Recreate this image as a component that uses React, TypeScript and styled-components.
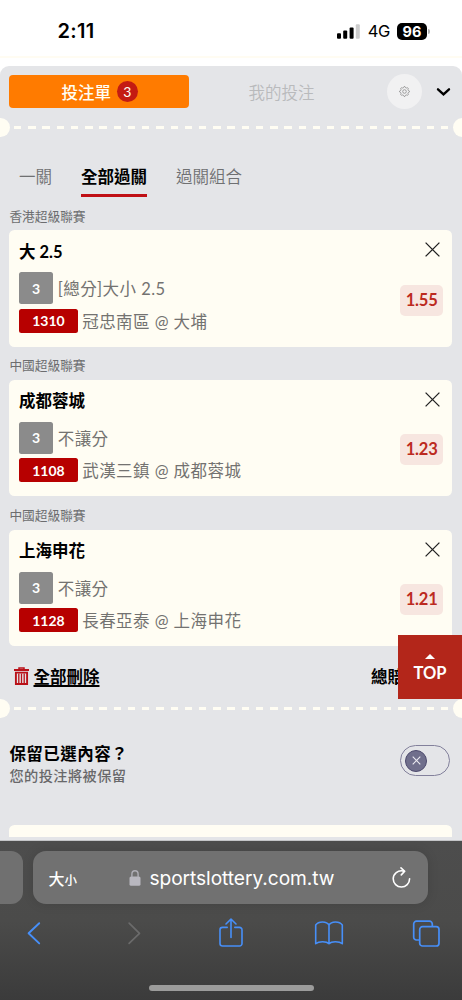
import React from "react";
import styled, { createGlobalStyle } from "styled-components";

const GlobalStyle = createGlobalStyle`
  * { box-sizing: border-box; }
  body { margin: 0; background: #fff; }
  button { border: 0; padding: 0; background: none; font: inherit; color: inherit; letter-spacing: inherit; }
  svg { display: block; flex: none; }
`;

const cream = "#fffdf3";
const red = "#b3261a";

const Screen = styled.div`
  width: 462px;
  height: 1000px;
  overflow: hidden;
  display: flex;
  flex-direction: column;
  font-family: Lato, "Noto Sans CJK TC", sans-serif;
  font-size: 16.5px;
  color: #000;
`;

const StatusBar = styled.header`
  height: 65.5px;
  flex: none;
  display: flex;
  justify-content: space-between;
  padding: 18px 32px 0 57.5px;
  font-family: Inter, sans-serif;
  background: linear-gradient(#fff 56.5px, #fffcf2 56.5px, #fffcf2 58.5px, #fff 58.5px);
`;

const Clock = styled.time`
  font-size: 20px;
  line-height: 26px;
  font-weight: 600;
  letter-spacing: 0.3px;
`;

const StatusIcons = styled.div`
  display: flex;
  height: 26px;
  align-items: center;
`;

const Network = styled.span`
  font-size: 16.5px;
  font-weight: 400;
  letter-spacing: -0.3px;
  margin: 0 7px 0 8px;
`;

const Battery = styled.span`
  width: 30px;
  height: 17px;
  border-radius: 5px;
  background: #000;
  color: #fff;
  font-size: 14.5px;
  font-weight: 700;
  line-height: 17px;
  text-align: center;
`;

const BatteryTip = styled.span`
  width: 2px;
  height: 5px;
  margin-left: 1px;
  border-radius: 0 2px 2px 0;
  background: #b5b5b5;
`;

const Panel = styled.main`
  position: relative;
  height: 775.5px;
  flex: none;
  overflow: hidden;
  background: #e4e5e8;
  border-radius: 9px 9px 0 0;
  border-bottom: 1.5px solid #c4c5c8;
`;

const SlipHeader = styled.div`
  display: flex;
  align-items: center;
  height: 52px;
  padding: 0 10.5px 0 9.4px;
`;

const SlipTab = styled.button<{ $active?: boolean }>`
  display: flex;
  align-items: center;
  justify-content: center;
  gap: 6px;
  width: ${(p) => (p.$active ? 179.5 : 198)}px;
  height: 33px;
  padding-right: ${(p) => (p.$active ? 0 : 13)}px;
  padding-left: ${(p) => (p.$active ? 1 : 0)}px;
  border-radius: 4px;
  background: ${(p) => (p.$active ? "#ff7b00" : "transparent")};
  color: ${(p) => (p.$active ? cream : "#b9babc")};
  font-weight: ${(p) => (p.$active ? 500 : 350)};
`;

const Count = styled.span`
  width: 21px;
  height: 21px;
  border-radius: 50%;
  background: #c41b12;
  font-size: 14px;
  font-weight: 400;
  line-height: 21px;
  text-align: center;
`;

const Settings = styled.button`
  display: flex;
  align-items: center;
  justify-content: center;
  width: 35.5px;
  height: 35.5px;
  border-radius: 50%;
  background: #f1f1f2;
  margin-right: 14px;
`;

const Perforation = styled.div`
  display: flex;
  align-items: center;
  justify-content: space-between;
  height: 19px;
  margin: 0 -10px 0 -9.5px;
`;

const Notch = styled.span`
  width: 19px;
  height: 19px;
  border-radius: 50%;
  background: ${cream};
`;

const Dashes = styled.span`
  width: 434px;
  height: 2.5px;
  margin-top: 1px;
  background: repeating-linear-gradient(90deg, ${cream} 0 7.4px, transparent 7.4px 14.23px);
`;

const Modes = styled.nav`
  display: flex;
  gap: 29px;
  padding: 28px 0 0 18.9px;
  height: 60px;
`;

const Mode = styled.button<{ $active?: boolean }>`
  height: 32.5px;
  line-height: 24px;
  padding-bottom: 5px;
  border-bottom: 3.5px solid ${(p) => (p.$active ? "#c01015" : "transparent")};
  color: ${(p) => (p.$active ? "#000" : "#6f7072")};
  font-weight: ${(p) => (p.$active ? 700 : 350)};
`;

const Pick = styled.section`
  height: 149.7px;
  padding: 0 9.6px 0 9.4px;
`;

const League = styled.h2`
  margin: 0;
  height: 33.7px;
  padding-top: 10px;
  font-size: 12.7px;
  line-height: 19px;
  font-weight: 400;
  color: #6c6d6f;
`;

const Card = styled.article`
  display: flex;
  justify-content: space-between;
  height: 116.4px;
  padding: 9.6px 9.5px 0 9.5px;
  border-radius: 5.5px;
  background: ${cream};
`;

const Details = styled.div`
  display: flex;
  flex-direction: column;
`;

const Selection = styled.h3`
  margin: 0 0 8.5px;
  height: 24px;
  line-height: 25px;
  font-size: 16.5px;
  font-weight: 700;
`;

const Line = styled.div<{ $h: number }>`
  display: flex;
  align-items: center;
  gap: 4.3px;
  height: ${(p) => p.$h}px;
  margin-bottom: 4.5px;
  letter-spacing: 0.45px;
  color: #737270;
  white-space: nowrap;
`;

const Tag = styled.span<{ $code?: boolean }>`
  width: ${(p) => (p.$code ? 59 : 34.5)}px;
  height: 100%;
  border-radius: 2.5px;
  background: ${(p) => (p.$code ? "#b70000" : "#8b8b8b")};
  color: #fff;
  display: flex;
  align-items: center;
  justify-content: center;
  font-size: 14px;
  font-weight: 700;
  letter-spacing: 0;
`;

const Side = styled.div`
  display: flex;
  flex-direction: column;
  align-items: flex-end;
  justify-content: space-between;
  height: 76px;
`;

const Close = styled.button`
  margin: 2.5px 2.5px 0 0;
`;

const Odds = styled.span`
  width: 42.5px;
  height: 31px;
  border-radius: 5px;
  background: #f7e6e0;
  color: #bc2a20;
  font-size: 16.5px;
  font-weight: 700;
  line-height: 31px;
  letter-spacing: -0.2px;
  text-align: center;
`;

const Summary = styled.div`
  display: flex;
  justify-content: space-between;
  height: 53px;
  padding: 19px 9.5px 0 14px;
  line-height: 24px;
  font-weight: 700;
`;

const ClearAll = styled.button`
  display: flex;
  gap: 4.5px;
  height: 24px;
  font-weight: 700;
  text-decoration: underline;
  text-decoration-thickness: 1.5px;
  text-underline-offset: 2px;
  svg { margin-top: 1.5px; }
`;

const Total = styled.span`
  width: 81.5px;
`;

const Keep = styled.div`
  display: flex;
  justify-content: space-between;
  height: 107px;
  padding: 24.5px 12px 0 9.4px;
`;

const KeepTitle = styled.div`
  font-weight: 700;
  line-height: 24px;
  letter-spacing: 0.45px;
`;

const KeepNote = styled.div`
  font-size: 14.2px;
  font-weight: 500;
  line-height: 20px;
  letter-spacing: 0.45px;
  color: #68686a;
`;

const Toggle = styled.button`
  display: flex;
  align-items: center;
  width: 50px;
  height: 31px;
  margin-top: 3px;
  padding-left: 4px;
  border: 1.2px solid #82809b;
  border-radius: 16px;
`;

const Knob = styled.span`
  display: flex;
  align-items: center;
  justify-content: center;
  width: 22px;
  height: 22px;
  border-radius: 50%;
  border: 1.2px solid #4d4a6d;
  background: #706f8c;
`;

const NextCard = styled.div`
  height: 12.5px;
  margin: 0 9.6px 0 9.4px;
  border-radius: 5.5px 5.5px 0 0;
  background: ${cream};
`;

const TopButton = styled.button`
  position: absolute;
  right: 0;
  top: 569.5px;
  width: 64px;
  height: 64px;
  display: flex;
  flex-direction: column;
  align-items: center;
  padding-top: 18.5px;
  gap: 3.5px;
  background: ${red};
  color: #fff;
  font-size: 16.5px;
  font-weight: 700;
  line-height: 22px;
`;

const Browser = styled.footer`
  flex: 1;
  display: flex;
  flex-direction: column;
  align-items: center;
  padding-top: 10px;
  background: linear-gradient(#4d4d4d, #4b4b4a 50%, #3b3b3b);
`;

const Tabs = styled.div`
  display: flex;
  align-self: stretch;
  gap: 10px;
  height: 53px;
`;

const PreviousTab = styled.div`
  width: 23.4px;
  border-radius: 0 12px 12px 0;
  background: #707070;
`;

const Address = styled.div`
  display: flex;
  align-items: center;
  width: 395px;
  padding: 0 17px 0 15px;
  border-radius: 13px;
  background: #717171;
  box-shadow: 0 0 12px rgba(0, 0, 0, 0.12);
  color: #fff;
  font-family: Inter, "Noto Sans CJK TC", sans-serif;
  font-size: 19.2px;
`;

const TextSize = styled.span`
  width: 81px;
  font-size: 16px;
  font-weight: 500;
  small { font-size: 12.5px; }
`;

const Domain = styled.span`
  flex: 1;
  padding-left: 8px;
  letter-spacing: -0.07px;
`;

const Toolbar = styled.nav`
  display: flex;
  align-items: center;
  justify-content: space-between;
  align-self: stretch;
  height: 58px;
  padding: 0 20px 0 19px;
  color: #478ff8;
`;

const HomeIndicator = styled.div`
  width: 165px;
  height: 6px;
  margin-top: 22.5px;
  border-radius: 3px;
  background: #9c9c9b;
`;

const picks = [
  { league: "香港超級聯賽", name: "大 2.5", market: "[總分]大小 2.5", code: "1310", match: "冠忠南區 @ 大埔", odds: "1.55" },
  { league: "中國超級聯賽", name: "成都蓉城", market: "不讓分", code: "1108", match: "武漢三鎮 @ 成都蓉城", odds: "1.23" },
  { league: "中國超級聯賽", name: "上海申花", market: "不讓分", code: "1128", match: "長春亞泰 @ 上海申花", odds: "1.21" },
];

const Divider = () => (
  <Perforation>
    <Notch />
    <Dashes />
    <Notch />
  </Perforation>
);

const gearPath = Array.from({ length: 32 }, (_, i) => {
  const r = i % 4 < 2 ? 4.9 : 3.9;
  const a = (i * Math.PI) / 16 - Math.PI / 2 - Math.PI / 32;
  return `${i ? "L" : "M"}${(5.5 + r * Math.cos(a)).toFixed(2)} ${(5.5 + r * Math.sin(a)).toFixed(2)}`;
}).join("") + "Z";

export default function App() {
  return (
    <Screen>
      <GlobalStyle />
      <StatusBar>
        <Clock>2:11</Clock>
        <StatusIcons>
          <svg width="23" height="15" viewBox="0 0 23 15">
            <rect x="0" y="9.2" width="4" height="5.6" rx="1" />
            <rect x="6.2" y="6.5" width="4" height="8.3" rx="1" />
            <rect x="12.6" y="3.5" width="4" height="11.3" rx="1" />
            <rect x="18.8" y="0.2" width="4" height="14.6" rx="1" fill="#ccc" />
          </svg>
          <Network>4G</Network>
          <Battery>96</Battery>
          <BatteryTip />
        </StatusIcons>
      </StatusBar>

      <Panel>
        <SlipHeader>
          <SlipTab $active>投注單<Count>3</Count></SlipTab>
          <SlipTab>我的投注</SlipTab>
          <Settings>
            <svg width="11" height="11" viewBox="0 0 11 11" fill="none" stroke="#8c8c8c" strokeWidth="0.8">
              <path d={gearPath} />
              <circle cx="5.5" cy="5.5" r="1.8" />
            </svg>
          </Settings>
          <svg width="15" height="9" viewBox="0 0 15 9" fill="none" stroke="#000" strokeWidth="2.4" strokeLinecap="round">
            <path d="M2 2.3 7.5 7.3 13 2.3" />
          </svg>
        </SlipHeader>
        <Divider />
        <Modes>
          <Mode>一關</Mode>
          <Mode $active>全部過關</Mode>
          <Mode>過關組合</Mode>
        </Modes>

        {picks.map((p) => (
          <Pick key={p.code}>
            <League>{p.league}</League>
            <Card>
              <Details>
                <Selection>{p.name}</Selection>
                <Line $h={32}><Tag>3</Tag>{p.market}</Line>
                <Line $h={24}><Tag $code>{p.code}</Tag>{p.match}</Line>
              </Details>
              <Side>
                <Close aria-label="remove">
                  <svg width="15" height="15" viewBox="0 0 15 15" stroke="#222" strokeWidth="1.3">
                    <path d="M.6.6 14.4 14.4M14.4.6.6 14.4" />
                  </svg>
                </Close>
                <Odds>{p.odds}</Odds>
              </Side>
            </Card>
          </Pick>
        ))}

        <Summary>
          <ClearAll>
            <svg width="15" height="20" viewBox="0 0 15 20" fill="none" stroke="#b91118">
              <path d="M0 4H15" strokeWidth="2" />
              <path d="M5 3.3V1.900H10V3.300" strokeWidth="1.500" />
              <path d="M1.900 6.600V18H13.100V6.600Z" strokeWidth="1.900" />
              <path d="M4.800 7.500V17M7.500 7.500V17M10.200 7.500V17" strokeWidth="1.300" />
            </svg>
            全部刪除
          </ClearAll>
          <Total>總賠</Total>
        </Summary>
        <Divider />
        <Keep>
          <div>
            <KeepTitle>保留已選內容？</KeepTitle>
            <KeepNote>您的投注將被保留</KeepNote>
          </div>
          <Toggle aria-label="keep selections">
            <Knob>
              <svg width="9" height="9" viewBox="0 0 9 9" stroke="#ecebf2" strokeWidth="1.1">
                <path d="M.7.7 8.3 8.3M8.3.7.7 8.3" />
              </svg>
            </Knob>
          </Toggle>
        </Keep>
        <NextCard />
        <TopButton>
          <svg width="10" height="5" viewBox="0 0 10 5" fill="#fff"><path d="M0 5 5 0 10 5Z" /></svg>
          TOP
        </TopButton>
      </Panel>

      <Browser>
        <Tabs>
          <PreviousTab />
          <Address>
            <TextSize>大<small>小</small></TextSize>
            <svg width="12" height="16" viewBox="0 0 12 16">
              <rect x="0.5" y="6.5" width="11" height="9.3" rx="1.6" fill="#b9b8c0" />
              <path d="M2.9 7V4.2a3.1 3.4 0 0 1 6.2 0V7" fill="none" stroke="#b0afb7" strokeWidth="1.4" />
            </svg>
            <Domain>sportslottery.com.tw</Domain>
            <svg width="19" height="22" viewBox="0 0 19 22" fill="none" stroke="#fff" strokeWidth="1.6" strokeLinecap="round" strokeLinejoin="round">
              <path d="M11.8 4.100C5.800 2.600 1.200 6.800 1.200 11.800a8.200 8.200 0 0 0 16.400 0" />
              <path d="M9 0.900 12.700 4.300 9.300 7.900" />
            </svg>
          </Address>
        </Tabs>
        <Toolbar>
          <svg width="30" height="30" viewBox="0 0 30 30" fill="none" stroke="currentColor" strokeWidth="1.9" strokeLinecap="round" strokeLinejoin="round">
            <path d="M20.2 5.200 9.600 15.300 20.200 25.400" />
          </svg>
          <svg width="30" height="30" viewBox="0 0 30 30" fill="none" stroke="#6b6b6b" strokeWidth="1.7" strokeLinecap="round" strokeLinejoin="round">
            <path d="M12.100 5.200 22.500 15.300 12.100 25.400" />
          </svg>
          <svg width="30" height="30" viewBox="0 0 30 30" fill="none" stroke="currentColor" strokeWidth="1.6" strokeLinecap="round" strokeLinejoin="round">
            <path d="M11.200 9.400H6.500a2.500 2.500 0 0 0-2.500 2.500V25.500a2.500 2.500 0 0 0 2.500 2.500h17A2.500 2.500 0 0 0 26 25.500V11.900a2.500 2.500 0 0 0-2.500-2.500h-4.700" />
            <path d="M15 19.500V1M10 6 15 1 20 6" />
          </svg>
          <svg width="30" height="30" viewBox="0 0 30 30" fill="none" stroke="currentColor" strokeWidth="1.6" strokeLinejoin="round">
            <path d="M15 7C12.800 3.100 4.500 2.900 1.700 7V25.700C4.800 23.100 12.500 23.100 15 25.700C17.500 23.100 25.200 23.100 28.300 25.700V7C25.500 2.900 17.200 3.100 15 7V25.700" />
          </svg>
          <svg width="30" height="30" viewBox="0 0 30 30" fill="none" stroke="currentColor" strokeWidth="1.7" strokeLinejoin="round">
            <path d="M7.500 22H4.500A2.800 2.800 0 0 1 1.700 19.200V6A2.800 2.800 0 0 1 4.500 3.200H17.500A2.800 2.800 0 0 1 20.300 6V8.500" />
            <rect x="7.700" y="8.700" width="19.300" height="19.300" rx="2.800" />
          </svg>
        </Toolbar>
        <HomeIndicator />
      </Browser>
    </Screen>
  );
}
